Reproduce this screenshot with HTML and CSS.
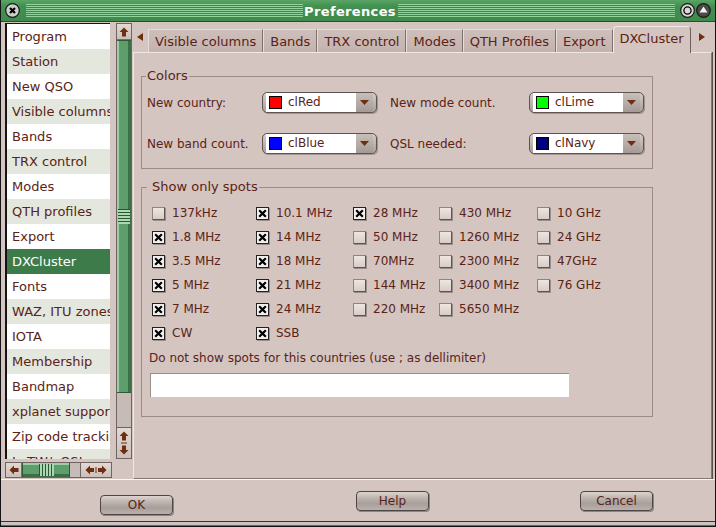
FILE: index.html
```html
<!DOCTYPE html>
<html>
<head>
<meta charset="utf-8">
<link rel="stylesheet" href="styles.css">
</head>
<body>
<div class="win">
  <div class="titlebar">
    <span class="tbtn tclose"><svg width="15" height="15" viewBox="0 0 15 15"><circle cx="7.5" cy="7.5" r="6.8" fill="#cfcfcb" stroke="#1a1a1a" stroke-width="1.2"/><path d="M5 5L10 10M10 5L5 10" stroke="#000" stroke-width="2.2"/></svg></span>
    <span class="stripes s1"></span>
    <span class="title">Preferences</span>
    <span class="stripes s2"></span>
    <span class="tbtn"><svg width="15" height="15" viewBox="0 0 15 15"><circle cx="7.5" cy="7.5" r="6.8" fill="#d8d8d4" stroke="#1a1a1a" stroke-width="1.2"/><circle cx="7.5" cy="7.5" r="3.6" fill="none" stroke="#000" stroke-width="1.3"/></svg></span>
    <span class="tbtn tlast"><svg width="15" height="15" viewBox="0 0 15 15"><circle cx="7.5" cy="7.5" r="6.8" fill="#4a4a48" stroke="#1a1a1a" stroke-width="1.2"/><path d="M7.5 3.5L11.5 9.5H3.5Z" fill="#f4f4f4"/></svg></span>
  </div>

  <div class="main">
    <div class="side">
      <div class="side-top">
        <ul class="list">
          <li>Program</li>
          <li>Station</li>
          <li>New QSO</li>
          <li>Visible columns</li>
          <li>Bands</li>
          <li>TRX control</li>
          <li>Modes</li>
          <li>QTH profiles</li>
          <li>Export</li>
          <li class="sel">DXCluster</li>
          <li>Fonts</li>
          <li>WAZ, ITU zones</li>
          <li>IOTA</li>
          <li>Membership</li>
          <li>Bandmap</li>
          <li>xplanet support</li>
          <li>Zip code tracking</li>
          <li>LoTW/eQSL support</li>
        </ul>
        <div class="vscroll">
          <div class="sbbtn"><svg width="10" height="10" viewBox="0 0 10 10"><path d="M5 0.5L9.5 5H7V9.5H3V5H0.5Z" fill="#6e2e10"/></svg></div>
          <div class="vthumb"><span class="grip-h"></span></div>
          <div class="vtrough"></div>
          <div class="sbbtn tall"><svg width="10" height="24" viewBox="0 0 10 24"><path d="M5 0.5L9.5 5H7V9.5H3V5H0.5Z" fill="#6e2e10"/><rect x="2" y="11.5" width="6" height="1" fill="#6e2e10"/><path d="M5 23.5L9.5 19H7V14.5H3V19H0.5Z" fill="#6e2e10"/></svg></div>
        </div>
      </div>
      <div class="hscroll">
        <div class="sbbtn hb"><svg width="10" height="10" viewBox="0 0 10 10"><path d="M0.5 5L5 0.5V3H9.5V7H5V9.5Z" fill="#6e2e10"/></svg></div>
        <div class="hthumb"><span class="grip-v"></span></div>
        <div class="htrough"></div>
        <div class="sbbtn hb wide"><svg width="22" height="10" viewBox="0 0 22 10"><path d="M0.5 5L5 0.5V3H9V7H5V9.5Z" fill="#6e2e10"/><rect x="10.5" y="2" width="1" height="6" fill="#6e2e10"/><path d="M21.5 5L17 0.5V3H13V7H17V9.5Z" fill="#6e2e10"/></svg></div>
      </div>
    </div>

    <div class="nb">
      <div class="tabs">
        <span class="tabarrow left"><svg width="6" height="8" viewBox="0 0 6 8"><path d="M6 0V8L0 4Z" fill="#6e2e10"/></svg></span>
        <span class="tab">Visible columns</span>
        <span class="tab">Bands</span>
        <span class="tab">TRX control</span>
        <span class="tab">Modes</span>
        <span class="tab">QTH Profiles</span>
        <span class="tab">Export</span>
        <span class="tab active">DXCluster</span>
        <span class="tabarrow right"><svg width="6" height="8" viewBox="0 0 6 8"><path d="M0 0V8L6 4Z" fill="#6e2e10"/></svg></span>
      </div>
      <div class="panel">
        <fieldset class="group g1">
          <legend>Colors</legend>
          <div class="colors">
            <span class="lbl">New country:</span>
            <div class="combo"><div class="field"><span class="swatch red"></span>clRed</div><span class="cbtn"><svg width="9" height="5" viewBox="0 0 9 5"><path d="M0 0H9L4.5 5Z" fill="#6e2e10"/></svg></span></div>
            <span class="lbl">New mode count.</span>
            <div class="combo"><div class="field"><span class="swatch lime"></span>clLime</div><span class="cbtn"><svg width="9" height="5" viewBox="0 0 9 5"><path d="M0 0H9L4.5 5Z" fill="#6e2e10"/></svg></span></div>
            <span class="lbl">New band count.</span>
            <div class="combo"><div class="field"><span class="swatch blue"></span>clBlue</div><span class="cbtn"><svg width="9" height="5" viewBox="0 0 9 5"><path d="M0 0H9L4.5 5Z" fill="#6e2e10"/></svg></span></div>
            <span class="lbl">QSL needed:</span>
            <div class="combo"><div class="field"><span class="swatch navy"></span>clNavy</div><span class="cbtn"><svg width="9" height="5" viewBox="0 0 9 5"><path d="M0 0H9L4.5 5Z" fill="#6e2e10"/></svg></span></div>
          </div>
        </fieldset>

        <fieldset class="group g2">
          <legend>Show only spots</legend>
          <div class="spots">
            <span class="cb"><span class="box"></span>137kHz</span>
            <span class="cb"><span class="box on"><svg width="9" height="9" viewBox="0 0 9 9"><path d="M1.2 1.2L7.8 7.8M7.8 1.2L1.2 7.8" stroke="#000" stroke-width="2.2"/></svg></span>10.1 MHz</span>
            <span class="cb"><span class="box on"><svg width="9" height="9" viewBox="0 0 9 9"><path d="M1.2 1.2L7.8 7.8M7.8 1.2L1.2 7.8" stroke="#000" stroke-width="2.2"/></svg></span>28 MHz</span>
            <span class="cb"><span class="box"></span>430 MHz</span>
            <span class="cb"><span class="box"></span>10 GHz</span>

            <span class="cb"><span class="box on"><svg width="9" height="9" viewBox="0 0 9 9"><path d="M1.2 1.2L7.8 7.8M7.8 1.2L1.2 7.8" stroke="#000" stroke-width="2.2"/></svg></span>1.8 MHz</span>
            <span class="cb"><span class="box on"><svg width="9" height="9" viewBox="0 0 9 9"><path d="M1.2 1.2L7.8 7.8M7.8 1.2L1.2 7.8" stroke="#000" stroke-width="2.2"/></svg></span>14 MHz</span>
            <span class="cb"><span class="box"></span>50 MHz</span>
            <span class="cb"><span class="box"></span>1260 MHz</span>
            <span class="cb"><span class="box"></span>24 GHz</span>

            <span class="cb"><span class="box on"><svg width="9" height="9" viewBox="0 0 9 9"><path d="M1.2 1.2L7.8 7.8M7.8 1.2L1.2 7.8" stroke="#000" stroke-width="2.2"/></svg></span>3.5 MHz</span>
            <span class="cb"><span class="box on"><svg width="9" height="9" viewBox="0 0 9 9"><path d="M1.2 1.2L7.8 7.8M7.8 1.2L1.2 7.8" stroke="#000" stroke-width="2.2"/></svg></span>18 MHz</span>
            <span class="cb"><span class="box"></span>70MHz</span>
            <span class="cb"><span class="box"></span>2300 MHz</span>
            <span class="cb"><span class="box"></span>47GHz</span>

            <span class="cb"><span class="box on"><svg width="9" height="9" viewBox="0 0 9 9"><path d="M1.2 1.2L7.8 7.8M7.8 1.2L1.2 7.8" stroke="#000" stroke-width="2.2"/></svg></span>5 MHz</span>
            <span class="cb"><span class="box on"><svg width="9" height="9" viewBox="0 0 9 9"><path d="M1.2 1.2L7.8 7.8M7.8 1.2L1.2 7.8" stroke="#000" stroke-width="2.2"/></svg></span>21 MHz</span>
            <span class="cb"><span class="box"></span>144 MHz</span>
            <span class="cb"><span class="box"></span>3400 MHz</span>
            <span class="cb"><span class="box"></span>76 GHz</span>

            <span class="cb"><span class="box on"><svg width="9" height="9" viewBox="0 0 9 9"><path d="M1.2 1.2L7.8 7.8M7.8 1.2L1.2 7.8" stroke="#000" stroke-width="2.2"/></svg></span>7 MHz</span>
            <span class="cb"><span class="box on"><svg width="9" height="9" viewBox="0 0 9 9"><path d="M1.2 1.2L7.8 7.8M7.8 1.2L1.2 7.8" stroke="#000" stroke-width="2.2"/></svg></span>24 MHz</span>
            <span class="cb"><span class="box"></span>220 MHz</span>
            <span class="cb"><span class="box"></span>5650 MHz</span>
            <span class="cb empty"></span>

            <span class="cb"><span class="box on"><svg width="9" height="9" viewBox="0 0 9 9"><path d="M1.2 1.2L7.8 7.8M7.8 1.2L1.2 7.8" stroke="#000" stroke-width="2.2"/></svg></span>CW</span>
            <span class="cb"><span class="box on"><svg width="9" height="9" viewBox="0 0 9 9"><path d="M1.2 1.2L7.8 7.8M7.8 1.2L1.2 7.8" stroke="#000" stroke-width="2.2"/></svg></span>SSB</span>
          </div>
          <div class="note">Do not show spots for this countries (use ; as dellimiter)</div>
          <div class="entry"></div>
        </fieldset>
      </div>
    </div>
  </div>

  <div class="btnbar">
    <button class="btn ok">OK</button>
    <button class="btn help">Help</button>
    <button class="btn cancel">Cancel</button>
  </div>
  <div class="bottomframe"></div>
</div>
</body>
</html>
```

FILE: styles.css
```css
html, body {
  margin: 0;
  padding: 0;
  background: #d5c5c0;
}

.win {
  width: 716px;
  height: 527px;
  box-sizing: border-box;
  border: 1px solid #141414;
  border-top: 0;
  background: #d5c5c0;
  font-family: "DejaVu Sans", sans-serif;
  color: #5b2316;
  display: flex;
  flex-direction: column;
  overflow: hidden;
}

/* ---------- title bar ---------- */
.titlebar {
  height: 21px;
  flex: none;
  margin: 0 -1px;
  background: linear-gradient(#5aa466, #42904f 30%, #3f8a4c);
  border-bottom: 1px solid #24502d;
  display: flex;
  align-items: center;
}
.tbtn {
  width: 15px;
  height: 15px;
  display: block;
  flex: none;
}
.tbtn svg { display: block; }
.tclose { margin-left: 5px; }
.tlast { margin-left: 1px; margin-right: 5px; }
.stripes {
  flex: 1;
  height: 13px;
  background: repeating-linear-gradient(#93d49e 0 1px, #3d874a 1px 2px);
}
.s1 { margin-left: 6px; }
.s2 { margin-right: 5px; }
.title {
  color: #fff;
  font-weight: bold;
  font-size: 13px;
  letter-spacing: 0.35px;
  margin: 0 2px 0 1px;
  line-height: 16px;
  padding-top: 3px;
}

/* ---------- main area ---------- */
.main {
  height: 457px;
  flex: none;
  display: flex;
  padding-left: 3px;
}
.side {
  width: 128px;
  display: flex;
  flex-direction: column;
}
.side-top {
  display: flex;
  margin-top: 1px;
}
.list {
  list-style: none;
  margin: 0 0 0 1px;
  padding: 0;
  width: 105px;
  height: 436px;
  box-sizing: border-box;
  border-left: 2px solid #141414;
  border-top: 1px solid #141414;
  background: #fff;
  overflow: hidden;
  font-size: 13px;
}
.list li {
  height: 25px;
  line-height: 26px;
  padding-left: 5px;
  white-space: nowrap;
  overflow: hidden;
}
.list li:nth-child(even) { background: #e3e7de; }
.list li.sel { background: #3e7b4b; color: #fff; }

/* scrollbars */
.vscroll {
  margin-left: 6px;
  width: 16px;
  height: 436px;
  box-sizing: border-box;
  border: 1px solid #6e6462;
  background: #c7bbb7;
  display: flex;
  flex-direction: column;
}
.sbbtn {
  height: 15px;
  flex: none;
  background: linear-gradient(#e2d8d4, #cbbfbb);
  border-bottom: 1px solid #7a6e6a;
  display: flex;
  align-items: center;
  justify-content: center;
}
.sbbtn svg { display: block; }
.sbbtn.tall {
  height: 30px;
  border-bottom: 0;
  border-top: 1px solid #6e6462;
}
.vthumb {
  height: 353px;
  flex: none;
  box-sizing: border-box;
  background: linear-gradient(90deg, #9ccfa5 0 2px, #5f9d6c 2px 11px, #3c6e47 11px);
  border-top: 1px solid #2f5a38;
  border-bottom: 1px solid #2f5a38;
  display: flex;
  align-items: center;
  justify-content: center;
}
.grip-h {
  width: 12px;
  height: 15px;
  background: repeating-linear-gradient(#2d5535 0 1px, #a9d8b1 1px 3px);
}
.vtrough { flex: 1; }

.hscroll {
  margin: 3px 0 0 1px;
  width: 107px;
  height: 16px;
  box-sizing: border-box;
  border: 1px solid #6e6462;
  background: #c7bbb7;
  display: flex;
}
.sbbtn.hb {
  width: 15px;
  height: auto;
  border-bottom: 0;
  border-right: 1px solid #7a6e6a;
}
.sbbtn.wide {
  width: 30px;
  border-right: 0;
  border-left: 1px solid #6e6462;
}
.hthumb {
  width: 48px;
  flex: none;
  box-sizing: border-box;
  background: linear-gradient(#9ccfa5 0 2px, #5f9d6c 2px 11px, #3c6e47 11px);
  border-left: 1px solid #2f5a38;
  border-right: 1px solid #2f5a38;
  display: flex;
  align-items: center;
  justify-content: center;
}
.grip-v {
  width: 15px;
  height: 12px;
  background: repeating-linear-gradient(90deg, #2d5535 0 1px, #a9d8b1 1px 3px);
}
.htrough { flex: 1; }

/* ---------- notebook ---------- */
.nb {
  width: 579px;
  margin-left: 1px;
  display: flex;
  flex-direction: column;
}
.tabs {
  height: 30px;
  flex: none;
  display: flex;
  align-items: flex-end;
  font-size: 13px;
}
.tabarrow {
  align-self: flex-start;
  margin-top: 11px;
  display: block;
}
.tabarrow svg { display: block; }
.tabarrow.left { margin-left: 4px; margin-right: 5px; }
.tabarrow.right { margin-left: 8px; }
.tab {
  height: 23px;
  box-sizing: border-box;
  line-height: 21px;
  padding: 1px 6px 0;
  background: linear-gradient(#cfbfba, #c3b2ad);
  border-top: 1px solid #e8dcd8;
  border-left: 1px solid #e8dcd8;
  border-right: 1px solid #7e706c;
  white-space: nowrap;
}
.tab.active {
  position: relative;
  z-index: 1;
  height: 27px;
  margin-bottom: -1px;
  line-height: 24px;
  padding-top: 0;
  background: #d5c5c0;
  border-radius: 4px 4px 0 0;
  border-left: 1px solid #f2e8e4;
  border-top: 1px solid #f2e8e4;
  border-right: 1px solid #6e605c;
}
.panel {
  flex: 1;
  box-sizing: border-box;
  border-top: 1px solid #f0e6e2;
  border-left: 1px solid #f0e6e2;
  border-right: 1px solid #857773;
  border-bottom: 1px solid #857773;
  box-shadow: 1px 0 0 #5a4e4a;
  padding: 15px 0 0 7px;
}

/* group boxes */
.group {
  margin: 0;
  width: 512px;
  box-sizing: border-box;
  border: 1px solid #9c8b87;
  padding: 0 0 15px 5px;
  min-inline-size: 0;
}
.group legend {
  font-size: 13px;
  line-height: 14px;
  padding: 0 1px;
  margin-left: -1px;
}
.g1 { margin-top: 1px; padding-bottom: 14px; }
.g1 .colors { margin-top: 9px; }
.g2 {
  margin-top: 11px;
  padding: 0 0 19px 10px;
}
.g2 legend {
  padding: 0 1px 0 5px;
  margin-left: -5px;
}

.colors {
  display: grid;
  grid-template-columns: 115px 128px 139px 116px;
  grid-auto-rows: 21px;
  row-gap: 20px;
  margin-top: 10px;
  align-items: center;
  font-size: 12px;
}
.lbl { white-space: nowrap; }
.combo {
  width: 115px;
  height: 21px;
  box-sizing: border-box;
  border: 1px solid #5e5452;
  border-radius: 5px;
  background: linear-gradient(#d6ccc8, #a89e9a);
  box-shadow: 1px 1px 0 #a3958f;
  display: flex;
}
.field {
  flex: 1;
  background: #fff;
  margin-left: 3px;
  display: flex;
  align-items: center;
  padding-bottom: 2px;
  color: #5b2316;
}
.swatch {
  width: 11px;
  height: 11px;
  border: 1px solid #000;
  margin: 2px 6px 0 3px;
  flex: none;
}
.red { background: #ff0000; }
.lime { background: #00ff00; }
.blue { background: #0000ff; }
.navy { background: #000080; }
.cbtn {
  width: 17px;
  margin-right: 3px;
  flex: none;
  background: linear-gradient(#c8beba, #a49a96);
  display: flex;
  align-items: center;
  justify-content: center;
}
.cbtn svg { display: block; }

.spots {
  display: grid;
  grid-template-columns: 104px 97px 86px 98px 100px;
  grid-auto-rows: 24px;
  margin-top: 7px;
  font-size: 12px;
}
.cb {
  display: flex;
  align-items: center;
  white-space: nowrap;
}
.box {
  width: 13px;
  height: 13px;
  box-sizing: border-box;
  flex: none;
  margin-right: 7px;
  border: 1px solid #8e8480;
  border-right-color: #5e5450;
  border-bottom-color: #5e5450;
  background: linear-gradient(#eee6e2, #d8ccc8);
  box-shadow: 1px 1px 0 #9a8e8a;
  display: flex;
  align-items: center;
  justify-content: center;
}
.box svg { display: block; }
.box.on {
  border-color: #222;
  background: #f4f0ee;
}
.note {
  font-size: 12px;
  line-height: 15px;
  margin: 6px 0 0 -3px;
  white-space: nowrap;
}
.entry {
  margin: 7px 0 0 -2px;
  width: 419px;
  height: 24px;
  box-sizing: border-box;
  background: #fff;
  border-top: 1px solid #9a8e8a;
  border-left: 1px solid #9a8e8a;
}

/* ---------- buttons ---------- */
.btnbar {
  height: 41px;
  flex: none;
  border-top: 1px solid #fbf6f4;
  display: flex;
  align-items: flex-start;
}
.btn {
  width: 73px;
  height: 20px;
  box-sizing: border-box;
  border: 1px solid #4e4644;
  border-radius: 4px;
  background: linear-gradient(#dcd4d0 0, #bcb2ae 35%, #a89e9a 65%, #bab0ac 100%);
  box-shadow: 1px 1px 0 #8e8480;
  font-family: "DejaVu Sans", sans-serif;
  font-size: 12px;
  color: #5b2316;
  padding: 0;
  line-height: 17px;
}
.ok { margin: 15px 0 0 99px; }
.help { margin: 11px 0 0 183px; }
.cancel { margin: 11px 0 0 151px; }

.bottomframe {
  height: 5px;
  flex: none;
  box-sizing: border-box;
  border-top: 1px solid #3a3432;
  background: #cbc3bf;
  border-bottom: 1px solid #6a6260;
}
```
